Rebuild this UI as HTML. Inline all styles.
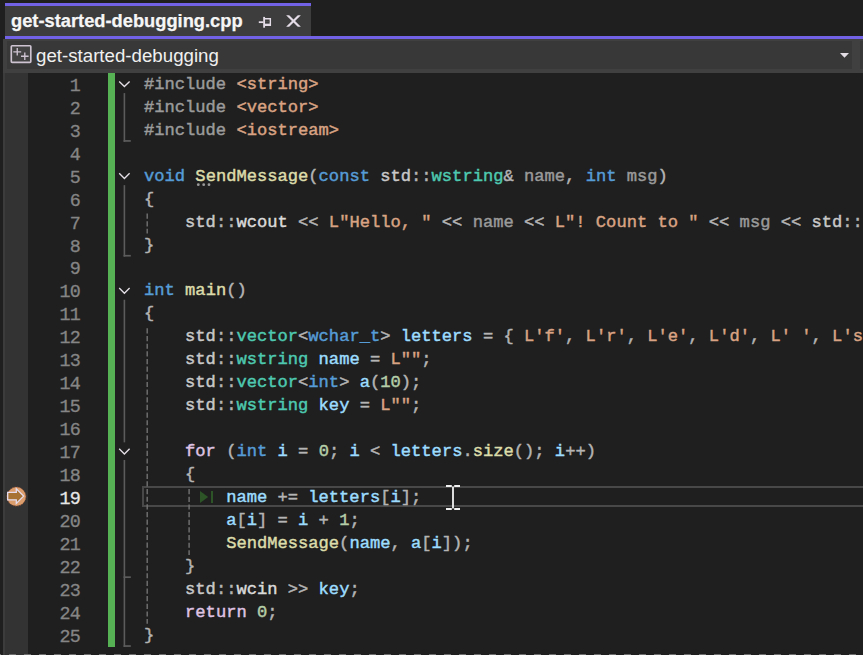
<!DOCTYPE html>
<html><head><meta charset="utf-8"><style>
html,body{margin:0;padding:0;}
body{width:863px;height:655px;overflow:hidden;position:relative;background:#1f1f1f;font-family:"Liberation Sans",sans-serif;}
.a{position:absolute;}
.ln{position:absolute;left:144px;height:23px;line-height:23px;white-space:pre;font-family:"Liberation Mono",monospace;font-size:17.13px;-webkit-text-stroke:0.45px currentColor;}
.num{position:absolute;left:39px;width:41px;text-align:right;height:23px;line-height:23px;font-family:"Liberation Mono",monospace;font-size:18.4px;letter-spacing:-0.79px;-webkit-text-stroke:0.3px currentColor;}
svg{position:absolute;left:0;top:0;}
</style></head><body>
<!-- tab -->
<div class="a" style="left:5px;top:3px;width:306px;height:3px;background:#7262e6"></div>
<div class="a" style="left:5px;top:6px;width:306px;height:30px;background:#3d3d3d"></div>
<div class="a" style="left:11px;top:6px;height:30px;line-height:30px;font-weight:bold;font-size:18.3px;color:#f6f6f6;-webkit-text-stroke:0.25px #f6f6f6;white-space:pre">get-started-debugging.cpp</div>
<div class="a" style="left:5px;top:36px;width:858px;height:3px;background:#7262e6"></div>
<!-- toolbar -->
<div class="a" style="left:3px;top:39px;width:860px;height:34px;background:#404040"></div>
<div class="a" style="left:7px;top:41px;width:845px;height:28px;background:#383838"></div>
<div class="a" style="left:860px;top:41px;width:3px;height:28px;background:#383838"></div>
<div class="a" style="left:36px;top:42px;height:28px;line-height:28px;font-size:18.7px;color:#f0f0f0;white-space:pre">get-started-debugging</div>
<!-- margins -->
<div class="a" style="left:3px;top:73px;width:2px;height:582px;background:#3c3c3c"></div>
<div class="a" style="left:5px;top:73px;width:23px;height:582px;background:#333333"></div>
<div class="a" style="left:108px;top:73px;width:7px;height:573.5px;background:#56b054"></div>
<!-- current line box -->
<div class="a" style="left:142px;top:486px;width:730px;height:17px;border:2px solid #484848"></div>
<div class="num" style="top:74.5px;color:#858585">1</div><div class="num" style="top:97.5px;color:#858585">2</div><div class="num" style="top:120.5px;color:#858585">3</div><div class="num" style="top:143.5px;color:#858585">4</div><div class="num" style="top:166.5px;color:#858585">5</div><div class="num" style="top:189.5px;color:#858585">6</div><div class="num" style="top:212.5px;color:#858585">7</div><div class="num" style="top:235.5px;color:#858585">8</div><div class="num" style="top:257.5px;color:#858585">9</div><div class="num" style="top:280.5px;color:#858585">10</div><div class="num" style="top:303.5px;color:#858585">11</div><div class="num" style="top:326.5px;color:#858585">12</div><div class="num" style="top:349.5px;color:#858585">13</div><div class="num" style="top:372.5px;color:#858585">14</div><div class="num" style="top:395.5px;color:#858585">15</div><div class="num" style="top:418.5px;color:#858585">16</div><div class="num" style="top:441.5px;color:#858585">17</div><div class="num" style="top:464.5px;color:#858585">18</div><div class="num" style="top:487.5px;color:#e6e6e6">19</div><div class="num" style="top:510.5px;color:#858585">20</div><div class="num" style="top:533.5px;color:#858585">21</div><div class="num" style="top:556.5px;color:#858585">22</div><div class="num" style="top:579.5px;color:#858585">23</div><div class="num" style="top:602.5px;color:#858585">24</div><div class="num" style="top:625.5px;color:#858585">25</div>
<div class="ln" style="top:73px"><span style="color:#9b9b9b">#include</span><span style="color:#b4b4b4"> </span><span style="color:#d9a383">&lt;string&gt;</span></div><div class="ln" style="top:96px"><span style="color:#9b9b9b">#include</span><span style="color:#b4b4b4"> </span><span style="color:#d9a383">&lt;vector&gt;</span></div><div class="ln" style="top:119px"><span style="color:#9b9b9b">#include</span><span style="color:#b4b4b4"> </span><span style="color:#d9a383">&lt;iostream&gt;</span></div><div class="ln" style="top:142px"></div><div class="ln" style="top:165px"><span style="color:#569cd6">void</span><span style="color:#b4b4b4"> </span><span style="color:#dcdcaa">SendMessage</span><span style="color:#b4b4b4">(</span><span style="color:#569cd6">const</span><span style="color:#b4b4b4"> </span><span style="color:#c8c8c8">std</span><span style="color:#b4b4b4">::</span><span style="color:#4ec9b0">wstring</span><span style="color:#b4b4b4">&amp;</span><span style="color:#b4b4b4"> </span><span style="color:#9a9a9a">name</span><span style="color:#b4b4b4">, </span><span style="color:#569cd6">int</span><span style="color:#b4b4b4"> </span><span style="color:#9a9a9a">msg</span><span style="color:#b4b4b4">)</span></div><div class="ln" style="top:188px"><span style="color:#b4b4b4">{</span></div><div class="ln" style="top:211px"><span style="color:#b4b4b4">    </span><span style="color:#c8c8c8">std</span><span style="color:#b4b4b4">::</span><span style="color:#dadada">wcout</span><span style="color:#b4b4b4"> &lt;&lt; </span><span style="color:#d9a383">L&quot;Hello, &quot;</span><span style="color:#b4b4b4"> &lt;&lt; </span><span style="color:#9a9a9a">name</span><span style="color:#b4b4b4"> &lt;&lt; </span><span style="color:#d9a383">L&quot;! Count to &quot;</span><span style="color:#b4b4b4"> &lt;&lt; </span><span style="color:#9a9a9a">msg</span><span style="color:#b4b4b4"> &lt;&lt; </span><span style="color:#c8c8c8">std</span><span style="color:#b4b4b4">::</span></div><div class="ln" style="top:234px"><span style="color:#b4b4b4">}</span></div><div class="ln" style="top:256px"></div><div class="ln" style="top:279px"><span style="color:#569cd6">int</span><span style="color:#b4b4b4"> </span><span style="color:#dcdcaa">main</span><span style="color:#b4b4b4">()</span></div><div class="ln" style="top:302px"><span style="color:#b4b4b4">{</span></div><div class="ln" style="top:325px"><span style="color:#b4b4b4">    </span><span style="color:#c8c8c8">std</span><span style="color:#b4b4b4">::</span><span style="color:#4ec9b0">vector</span><span style="color:#b4b4b4">&lt;</span><span style="color:#569cd6">wchar_t</span><span style="color:#b4b4b4">&gt;</span><span style="color:#b4b4b4"> </span><span style="color:#9cdcfe">letters</span><span style="color:#b4b4b4"> = { </span><span style="color:#d9a383">L&#x27;f&#x27;</span><span style="color:#b4b4b4">, </span><span style="color:#d9a383">L&#x27;r&#x27;</span><span style="color:#b4b4b4">, </span><span style="color:#d9a383">L&#x27;e&#x27;</span><span style="color:#b4b4b4">, </span><span style="color:#d9a383">L&#x27;d&#x27;</span><span style="color:#b4b4b4">, </span><span style="color:#d9a383">L&#x27; &#x27;</span><span style="color:#b4b4b4">, </span><span style="color:#d9a383">L&#x27;s</span></div><div class="ln" style="top:348px"><span style="color:#b4b4b4">    </span><span style="color:#c8c8c8">std</span><span style="color:#b4b4b4">::</span><span style="color:#4ec9b0">wstring</span><span style="color:#b4b4b4"> </span><span style="color:#9cdcfe">name</span><span style="color:#b4b4b4"> = </span><span style="color:#d9a383">L&quot;&quot;</span><span style="color:#b4b4b4">;</span></div><div class="ln" style="top:371px"><span style="color:#b4b4b4">    </span><span style="color:#c8c8c8">std</span><span style="color:#b4b4b4">::</span><span style="color:#4ec9b0">vector</span><span style="color:#b4b4b4">&lt;</span><span style="color:#569cd6">int</span><span style="color:#b4b4b4">&gt;</span><span style="color:#b4b4b4"> </span><span style="color:#9cdcfe">a</span><span style="color:#b4b4b4">(</span><span style="color:#b5cea8">10</span><span style="color:#b4b4b4">);</span></div><div class="ln" style="top:394px"><span style="color:#b4b4b4">    </span><span style="color:#c8c8c8">std</span><span style="color:#b4b4b4">::</span><span style="color:#4ec9b0">wstring</span><span style="color:#b4b4b4"> </span><span style="color:#9cdcfe">key</span><span style="color:#b4b4b4"> = </span><span style="color:#d9a383">L&quot;&quot;</span><span style="color:#b4b4b4">;</span></div><div class="ln" style="top:417px"></div><div class="ln" style="top:440px"><span style="color:#b4b4b4">    </span><span style="color:#dfc3e3">for</span><span style="color:#b4b4b4"> (</span><span style="color:#569cd6">int</span><span style="color:#b4b4b4"> </span><span style="color:#9cdcfe">i</span><span style="color:#b4b4b4"> = </span><span style="color:#b5cea8">0</span><span style="color:#b4b4b4">; </span><span style="color:#9cdcfe">i</span><span style="color:#b4b4b4"> &lt; </span><span style="color:#9cdcfe">letters</span><span style="color:#b4b4b4">.</span><span style="color:#dcdcaa">size</span><span style="color:#b4b4b4">(); </span><span style="color:#9cdcfe">i</span><span style="color:#b4b4b4">++)</span></div><div class="ln" style="top:463px"><span style="color:#b4b4b4">    {</span></div><div class="ln" style="top:486px"><span style="color:#b4b4b4">        </span><span style="color:#9cdcfe">name</span><span style="color:#b4b4b4"> += </span><span style="color:#9cdcfe">letters</span><span style="color:#b4b4b4">[</span><span style="color:#9cdcfe">i</span><span style="color:#b4b4b4">];</span></div><div class="ln" style="top:509px"><span style="color:#b4b4b4">        </span><span style="color:#9cdcfe">a</span><span style="color:#b4b4b4">[</span><span style="color:#9cdcfe">i</span><span style="color:#b4b4b4">] = </span><span style="color:#9cdcfe">i</span><span style="color:#b4b4b4"> + </span><span style="color:#b5cea8">1</span><span style="color:#b4b4b4">;</span></div><div class="ln" style="top:532px"><span style="color:#b4b4b4">        </span><span style="color:#dcdcaa">SendMessage</span><span style="color:#b4b4b4">(</span><span style="color:#9cdcfe">name</span><span style="color:#b4b4b4">, </span><span style="color:#9cdcfe">a</span><span style="color:#b4b4b4">[</span><span style="color:#9cdcfe">i</span><span style="color:#b4b4b4">]);</span></div><div class="ln" style="top:555px"><span style="color:#b4b4b4">    }</span></div><div class="ln" style="top:578px"><span style="color:#b4b4b4">    </span><span style="color:#c8c8c8">std</span><span style="color:#b4b4b4">::</span><span style="color:#dadada">wcin</span><span style="color:#b4b4b4"> &gt;&gt; </span><span style="color:#9cdcfe">key</span><span style="color:#b4b4b4">;</span></div><div class="ln" style="top:601px"><span style="color:#b4b4b4">    </span><span style="color:#dfc3e3">return</span><span style="color:#b4b4b4"> </span><span style="color:#b5cea8">0</span><span style="color:#b4b4b4">;</span></div><div class="ln" style="top:624px"><span style="color:#b4b4b4">}</span></div>
<svg width="863" height="655" viewBox="0 0 863 655">
<polyline points="119.2,81.40 124.4,86.60 129.6,81.40" fill="none" stroke="#e4dee6" stroke-width="1.35"/><polyline points="119.2,173.24 124.4,178.44 129.6,173.24" fill="none" stroke="#e4dee6" stroke-width="1.35"/><polyline points="119.2,288.04 124.4,293.24 129.6,288.04" fill="none" stroke="#e4dee6" stroke-width="1.35"/><polyline points="119.2,448.76 124.4,453.96 129.6,448.76" fill="none" stroke="#e4dee6" stroke-width="1.35"/><rect x="123.6" y="93.10" width="1.6" height="48.78" fill="#5c5c5c"/><rect x="123.6" y="140.08" width="7.2" height="1.7" fill="#5c5c5c"/><rect x="123.6" y="185.14" width="1.6" height="71.54" fill="#5c5c5c"/><rect x="123.6" y="254.88" width="7.2" height="1.7" fill="#5c5c5c"/><rect x="123.6" y="299.74" width="1.6" height="142.62" fill="#5c5c5c"/><rect x="123.6" y="459.96" width="1.6" height="187.04" fill="#5c5c5c"/><rect x="123.6" y="576.32" width="7.2" height="1.7" fill="#5c5c5c"/><rect x="123.6" y="645.20" width="7.2" height="1.7" fill="#5c5c5c"/><line x1="147.2" y1="211.36" x2="147.2" y2="233.52" stroke="#727272" stroke-width="1.4" stroke-dasharray="0 2.2 5.2 0.25" /><line x1="147.2" y1="326.16" x2="147.2" y2="623.84" stroke="#727272" stroke-width="1.4" stroke-dasharray="0 2.2 5.2 0.25" /><line x1="189.1" y1="486.88" x2="189.1" y2="554.96" stroke="#727272" stroke-width="1.4" stroke-dasharray="0 2.2 5.2 0.25" />
<!-- pin icon -->
<rect x="258.8" y="21.3" width="4.6" height="1.75" fill="#e4dce6"/>
<rect x="263.2" y="16.9" width="1.85" height="10.8" fill="#e4dce6"/>
<rect x="265" y="18" width="6" height="1.5" fill="#e4dce6"/>
<rect x="269.6" y="18" width="1.45" height="8" fill="#e4dce6"/>
<rect x="265" y="23.65" width="6" height="2.35" fill="#e4dce6"/>
<rect x="265" y="21.4" width="4.6" height="0.7" fill="#5a5a5a"/>
<!-- close X -->
<path d="M286.1,15.2 H289.2 L300.9,26.7 H297.8 Z" fill="#e4dce6"/><path d="M297.8,15.2 H300.9 L289.2,26.7 H286.1 Z" fill="#e4dce6"/>
<!-- toolbar icon -->
<rect x="11.3" y="45.7" width="19.5" height="16.6" rx="0.8" fill="#424242" stroke="#cdc3d1" stroke-width="1.65"/>
<path d="M13.3,51.8 H21.2 M17.25,47.9 V55.6 M21,56.2 H28.6 M24.8,52.4 V59.9" stroke="#cdc3d1" stroke-width="1.35"/>
<!-- dropdown arrow -->
<path d="M840,53 L849,53 L844.5,57.7 Z" fill="#e2dce4"/>
<!-- bottom dashed line -->
<line x1="-6" y1="654.5" x2="863" y2="654.5" stroke="#6f6f6f" stroke-width="1" stroke-dasharray="7 8"/>
<!-- IntelliSense dots -->
<circle cx="198.3" cy="184.7" r="1.4" fill="#9a9a9a"/>
<circle cx="203.7" cy="184.7" r="1.4" fill="#9a9a9a"/>
<circle cx="209" cy="184.7" r="1.4" fill="#9a9a9a"/>
<!-- step icon -->
<path d="M200,491 L208.2,497 L200,503 Z" fill="#2c5426"/>
<rect x="211" y="491" width="2" height="12" fill="#2c5426"/>
<!-- instruction pointer -->
<circle cx="16.4" cy="496.6" r="9.5" fill="#dc9d6c" stroke="#b85a34" stroke-width="0.9" stroke-dasharray="0.9 1.6"/>
<path d="M7.7,492.4 H16.3 V488.8 L23.6,496.1 L16.3,503.4 V499.8 H7.7 Z" fill="#a77233" stroke="#e4dcee" stroke-width="1.3" stroke-linejoin="miter"/>
<!-- I-beam -->
<path d="M446,486 H451.8 M454.2,486 H460 M453,486.6 V508.6 M446,509 H451.8 M454.2,509 H460" stroke="#f0f0f0" stroke-width="1.8"/>
</svg>
</body></html>
